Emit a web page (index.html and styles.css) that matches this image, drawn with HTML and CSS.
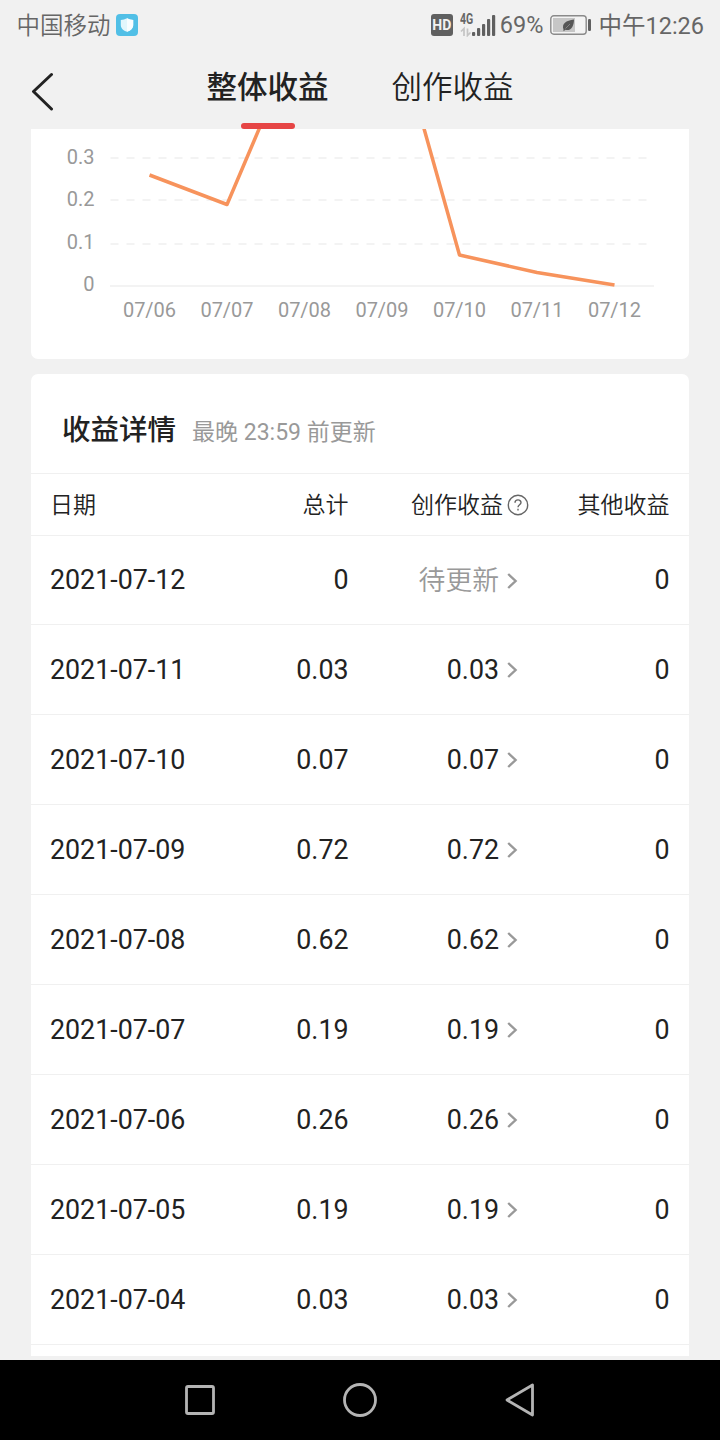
FILE: index.html
```html
<!DOCTYPE html>
<html lang="zh-CN">
<head>
    <meta charset="UTF-8">
    <meta name="viewport" content="width=device-width, initial-scale=1.0">
    <title>整体收益</title>
    <link rel="stylesheet" href="styles.css">
</head>
<body>

    <!-- shared icons -->
    <svg class="defs" width="0" height="0">
        <symbol id="arrow" viewBox="0 0 12 18">
            <path d="M2.2 2L9.6 9L2.2 16" fill="none" stroke="#999" stroke-width="2.4"/>
        </symbol>
    </svg>

    <div class="status">
        <span class="carrier">中国移动</span>
        <svg class="shield" width="22" height="22" viewBox="0 0 22 22">
            <rect width="22" height="22" rx="4" fill="#51bfe6"/>
            <path d="M11 4.2C9 5.2 7 5.8 4.8 6V11c0 3.4 2.5 5.5 6.2 6.8 3.7-1.300 6.200-3.400 6.200-6.800V6C15 5.800 13 5.200 11 4.200z" fill="#e2f6fc"/>
            <path d="M11 4.200c2 1 4 1.600 6.200 1.800V11c0 3.400-2.500 5.500-6.200 6.800z" fill="#f8fdff"/>
        </svg>
        <div class="status-right">
            <span class="hd">HD</span>
            <div class="signal">
                <span class="net">4G</span>
                <svg width="36" height="24" viewBox="0 0 36 24">
                    <g stroke="#c4c4c4" stroke-width="1.700" fill="none">
                        <path d="M4 23V15.500L1 18.500M7.500 15.500V22.500L10.500 19.500"/>
                    </g>
                    <g fill="#606060">
                        <rect x="12" y="19" width="3.200" height="4" rx="1"/>
                        <rect x="17" y="15" width="3.200" height="8" rx="1"/>
                        <rect x="22" y="11" width="3.200" height="12" rx="1"/>
                        <rect x="27" y="6" width="3.200" height="17" rx="1"/>
                        <rect x="32" y="2" width="3.200" height="21" rx="1"/>
                    </g>
                </svg>
            </div>
            <span class="percent">69%</span>
            <svg class="battery" width="42" height="20" viewBox="0 0 42 20">
                <rect x="0.800" y="0.800" width="35.400" height="18.400" rx="3" fill="#f3f3f3" stroke="#8a8a8a" stroke-width="1.400"/>
                <rect x="3" y="3" width="22" height="14" fill="#c6c6c6"/>
                <path d="M13.500 14.500C11.500 8.500 16 5.500 24 4.500C24 11 21 16.500 15.500 14.800L13.500 16.200z" fill="#555"/>
                <path d="M15.500 13.500L20 9" stroke="#999" stroke-width="0.700"/>
                <rect x="38" y="4" width="3" height="12" rx="1.200" fill="#606060"/>
            </svg>
            <span class="clock">中午12:26</span>
        </div>
    </div>

    <div class="nav">
        <svg class="back" width="24" height="40" viewBox="0 0 24 40">
            <path d="M20.500 3.500L2.500 20.500L20.500 38" fill="none" stroke="#222" stroke-width="3" stroke-linecap="round" stroke-linejoin="round"/>
        </svg>
        <span class="tab active">整体收益</span>
        <span class="tab">创作收益</span>
    </div>

    <div class="content">
        <div class="card chart">
            <svg width="658" height="230" viewBox="31 129 658 230">
                <g class="grid">
                    <path d="M110.500 158H647"/>
                    <path d="M110.500 200H647"/>
                    <path d="M110.500 244H647"/>
                </g>
                <path class="axis" d="M110 286H654"/>
                <polyline class="line" points="149.500,175 227,204.500 304.500,22 382,-21 459.500,255 537,272.500 614.500,285"/>
                <g class="y-labels">
                    <text x="94.500" y="164">0.3</text>
                    <text x="94.500" y="206">0.2</text>
                    <text x="94.500" y="249">0.1</text>
                    <text x="94.500" y="291">0</text>
                </g>
                <g class="x-labels">
                    <text x="149.500" y="317">07/06</text>
                    <text x="227" y="317">07/07</text>
                    <text x="304.500" y="317">07/08</text>
                    <text x="382" y="317">07/09</text>
                    <text x="459.500" y="317">07/10</text>
                    <text x="537" y="317">07/11</text>
                    <text x="614.500" y="317">07/12</text>
                </g>
            </svg>
        </div>

        <div class="card detail">
            <div class="detail-title">
                <h2>收益详情</h2>
                <span class="hint">最晚 23:59 前更新</span>
            </div>
            <div class="row head">
                <span>日期</span>
                <span>总计</span>
                <span class="with-icon">创作收益
                    <svg width="22" height="22" viewBox="0 0 22 22" fill="none" stroke="#666" stroke-width="1.400">
                        <circle cx="11" cy="11" r="9.700"/>
                        <path d="M8 8.800C8 5 14 5 14 8.600C14 10.800 11 10.800 11 13.300"/>
                        <path d="M11 14.800V16.400"/>
                    </svg>
                </span>
                <span>其他收益</span>
            </div>
            <div class="row first">
                <span>2021-07-12</span><span>0</span>
                <span class="link pending">待更新<svg><use href="#arrow"/></svg></span><span>0</span>
            </div>
            <div class="row">
                <span>2021-07-11</span><span>0.03</span>
                <span class="link">0.03<svg><use href="#arrow"/></svg></span><span>0</span>
            </div>
            <div class="row">
                <span>2021-07-10</span><span>0.07</span>
                <span class="link">0.07<svg><use href="#arrow"/></svg></span><span>0</span>
            </div>
            <div class="row">
                <span>2021-07-09</span><span>0.72</span>
                <span class="link">0.72<svg><use href="#arrow"/></svg></span><span>0</span>
            </div>
            <div class="row">
                <span>2021-07-08</span><span>0.62</span>
                <span class="link">0.62<svg><use href="#arrow"/></svg></span><span>0</span>
            </div>
            <div class="row">
                <span>2021-07-07</span><span>0.19</span>
                <span class="link">0.19<svg><use href="#arrow"/></svg></span><span>0</span>
            </div>
            <div class="row">
                <span>2021-07-06</span><span>0.26</span>
                <span class="link">0.26<svg><use href="#arrow"/></svg></span><span>0</span>
            </div>
            <div class="row">
                <span>2021-07-05</span><span>0.19</span>
                <span class="link">0.19<svg><use href="#arrow"/></svg></span><span>0</span>
            </div>
            <div class="row">
                <span>2021-07-04</span><span>0.03</span>
                <span class="link">0.03<svg><use href="#arrow"/></svg></span><span>0</span>
            </div>
        </div>
    </div>

    <div class="android-nav">
        <svg width="34" height="36" viewBox="0 0 34 36"><rect x="3.500" y="4.500" width="27" height="27" rx="1.500"/></svg>
        <svg width="36" height="36" viewBox="0 0 36 36"><circle cx="18" cy="18" r="15.500"/></svg>
        <svg width="34" height="36" viewBox="0 0 34 36"><path d="M29.500 3V33L4 18z"/></svg>
    </div>

</body>
</html>
```

FILE: styles.css
```css
* {
    box-sizing: border-box;
}
body {
    margin: 0;
    height: 1440px;
    display: flex;
    flex-direction: column;
    overflow: hidden;
    background-color: #f1f1f1;
    color: #222;
    font-family: Roboto, "Noto Sans CJK SC", sans-serif;
}
.defs {
    position: absolute;
}

/* status bar */
.status {
    height: 50px;
    flex: none;
    display: flex;
    align-items: center;
    padding: 0 16px 0 16.5px;
    color: #666;
    font-size: 23.5px;
    line-height: 50px;
}
.carrier,
.clock {
    padding-top: 1px;
}
.carrier {
    font-weight: 350;
}
.shield {
    margin-left: 5.5px;
}
.status-right {
    margin-left: auto;
    display: flex;
    align-items: center;
}
.hd {
    width: 22px;
    height: 22px;
    margin-right: 7px;
    border-radius: 3px;
    background-color: #606060;
    color: #f1f1f1;
    font-size: 14px;
    font-weight: 700;
    line-height: 23px;
    text-align: center;
}
.signal {
    position: relative;
    height: 24px;
    margin-right: 4px;
    display: flex;
}
.net {
    position: absolute;
    left: 0;
    top: -1px;
    font-size: 14px;
    font-weight: 700;
    line-height: 14px;
    transform: scaleX(0.75);
    transform-origin: left;
}
.percent {
    font-size: 23.5px;
}
.battery {
    margin: 0 6px 0 7px;
}

/* tabs */
.nav {
    height: 79px;
    flex: none;
    display: flex;
    padding-left: 31px;
}
.back {
    margin: 21px 151.5px 0 0;
}
.tab {
    position: relative;
    width: 122px;
    margin-right: 63px;
    font-size: 30.5px;
    font-weight: 350;
    line-height: 75px;
    white-space: nowrap;
}
.active {
    font-weight: 500;
}
.active::after {
    content: "";
    position: absolute;
    left: 34.5px;
    bottom: 0;
    width: 54px;
    height: 6px;
    border-radius: 3px;
    background-color: #e64545;
}

.content {
    flex: 1;
    padding: 0 31px;
    overflow: hidden;
}
.card {
    background-color: #fff;
    border-radius: 7px;
}

/* chart */
.chart {
    height: 230px;
    margin-bottom: 15px;
    border-radius: 0 0 7px 7px;
}
.chart svg {
    display: block;
    overflow: hidden;
}
.grid {
    stroke: #f3f3f3;
    stroke-width: 2;
    stroke-dasharray: 8 8;
}
.axis {
    stroke: #f3f3f3;
    stroke-width: 2;
}
.line {
    fill: none;
    stroke: #f7935c;
    stroke-width: 3.5;
    stroke-linejoin: round;
}
.chart text {
    fill: #999;
    font-size: 20px;
}
.y-labels {
    text-anchor: end;
}
.x-labels {
    text-anchor: middle;
}

/* detail table */
.detail {
    height: 982px;
    border-radius: 7px 7px 0 0;
}
.detail-title {
    height: 100px;
    display: flex;
    align-items: baseline;
    padding-left: 31px;
    border-bottom: 1px solid #f0f0f0;
    line-height: 114px;
}
h2 {
    margin: 0 16px 0 0;
    font-size: 28.5px;
    font-weight: 500;
}
.hint {
    color: #999;
    font-size: 23px;
}
.row {
    height: 90px;
    display: grid;
    grid-template-columns: 150px 148.5px 181.5px 1fr;
    padding: 0 19.5px 0 19px;
    border-bottom: 1px solid #f0f0f0;
    font-size: 26.8px;
    line-height: 91px;
    text-align: right;
}
.row > span:first-child {
    text-align: left;
}
.first {
    height: 89px;
    line-height: 89px;
}
.head {
    height: 62px;
    font-size: 23px;
    font-weight: 350;
    line-height: 63px;
}
.with-icon,
.link {
    height: 100%;
    display: flex;
    align-items: center;
    justify-content: flex-end;
}
.with-icon {
    padding-right: 1px;
}
.with-icon svg {
    margin: -1px 0 0 4px;
}
.link svg {
    width: 12px;
    height: 18px;
    margin: 0 12px 1px 6.5px;
}
.link {
    padding-right: 0.5px;
}
.pending {
    color: #999;
    font-weight: 350;
    line-height: 91px;
}

/* system navigation */
.android-nav {
    height: 80px;
    flex: none;
    display: flex;
    align-items: center;
    justify-content: center;
    gap: 125px;
    background-color: #000;
}
.android-nav svg {
    fill: none;
    stroke: #b4b4b4;
    stroke-width: 2.8;
    stroke-linejoin: round;
}
```
